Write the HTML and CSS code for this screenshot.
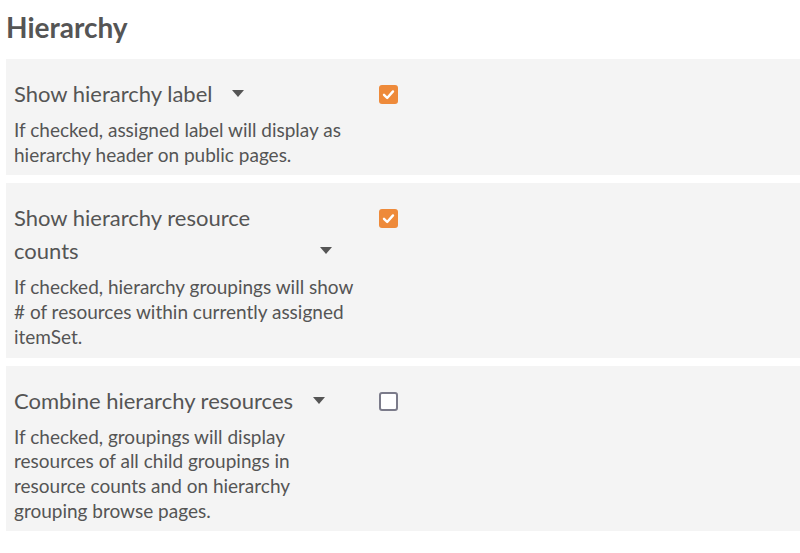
FILE: index.html
```html
<!DOCTYPE html>
<html>
<head>
<meta charset="utf-8">
<link rel="stylesheet" href="styles.css">
</head>
<body>
<div class="page">
  <h2 class="title">Hierarchy</h2>
  <div class="panels">
    <div class="panel">
      <div class="field-info">
        <div class="label-row"><span class="label-text">Show hierarchy label</span><span class="caret"></span></div>
        <p class="desc">If checked, assigned label will display as hierarchy header on public pages.</p>
      </div>
      <span class="checkbox checked"><svg viewBox="0 0 19 19" width="19" height="19"><path d="M5 9.8 L8.2 13 L14 6.4" fill="none" stroke="#fff" stroke-width="2.4" stroke-linecap="round" stroke-linejoin="round"/></svg></span>
    </div>
    <div class="panel">
      <div class="field-info">
        <div class="label-row"><span class="label-text">Show hierarchy resource counts</span><span class="caret"></span></div>
        <p class="desc">If checked, hierarchy groupings will show # of resources within currently assigned itemSet.</p>
      </div>
      <span class="checkbox checked"><svg viewBox="0 0 19 19" width="19" height="19"><path d="M5 9.8 L8.2 13 L14 6.4" fill="none" stroke="#fff" stroke-width="2.4" stroke-linecap="round" stroke-linejoin="round"/></svg></span>
    </div>
    <div class="panel">
      <div class="field-info">
        <div class="label-row"><span class="label-text">Combine hierarchy resources</span><span class="caret"></span></div>
        <p class="desc">If checked, groupings will display resources of all child groupings in resource counts and on hierarchy grouping browse pages.</p>
      </div>
      <span class="checkbox"></span>
    </div>
  </div>
</div>
</body>
</html>
```

FILE: styles.css
```css
html, body {
  margin: 0;
  padding: 0;
  background: #ffffff;
}

.page {
  padding: 0 0 0 6px;
  font-family: Lato, "Open Sans", sans-serif;
  color: #555555;
}

.title {
  margin: 0;
  padding-top: 11px;
  height: 59px;
  box-sizing: border-box;
  font-size: 28px;
  line-height: 33px;
  font-weight: 700;
  color: #555555;
}

.panels {
  display: flex;
  flex-direction: column;
  gap: 8px;
}

.panel {
  background: #f4f4f4;
  display: flex;
  align-items: flex-start;
  padding: 18px 8px 8px 8px;
}

.field-info {
  width: 346px;
  flex: none;
}

.label-row {
  display: flex;
  align-items: flex-end;
  max-width: 318px;
}

.label-text {
  flex: 0 1 auto;
  font-size: 22px;
  line-height: 33px;
  color: #555555;
}

.caret {
  flex: none;
  width: 0;
  height: 0;
  margin-left: 20px;
  margin-bottom: 13px;
  border-left: 6px solid transparent;
  border-right: 6px solid transparent;
  border-top: 7px solid #555555;
}

.desc {
  margin: 8px 0 0 0;
  font-size: 19px;
  line-height: 24.7px;
  color: #555555;
}

.checkbox {
  flex: none;
  box-sizing: border-box;
  width: 19px;
  height: 19px;
  margin-left: 19px;
  margin-top: 8px;
  border: 2px solid #7b7b8a;
  border-radius: 3px;
  background: #ffffff;
  display: flex;
}

.checkbox.checked {
  border: none;
  background: #ee8a3a;
}

.checkbox svg {
  display: block;
}
```
